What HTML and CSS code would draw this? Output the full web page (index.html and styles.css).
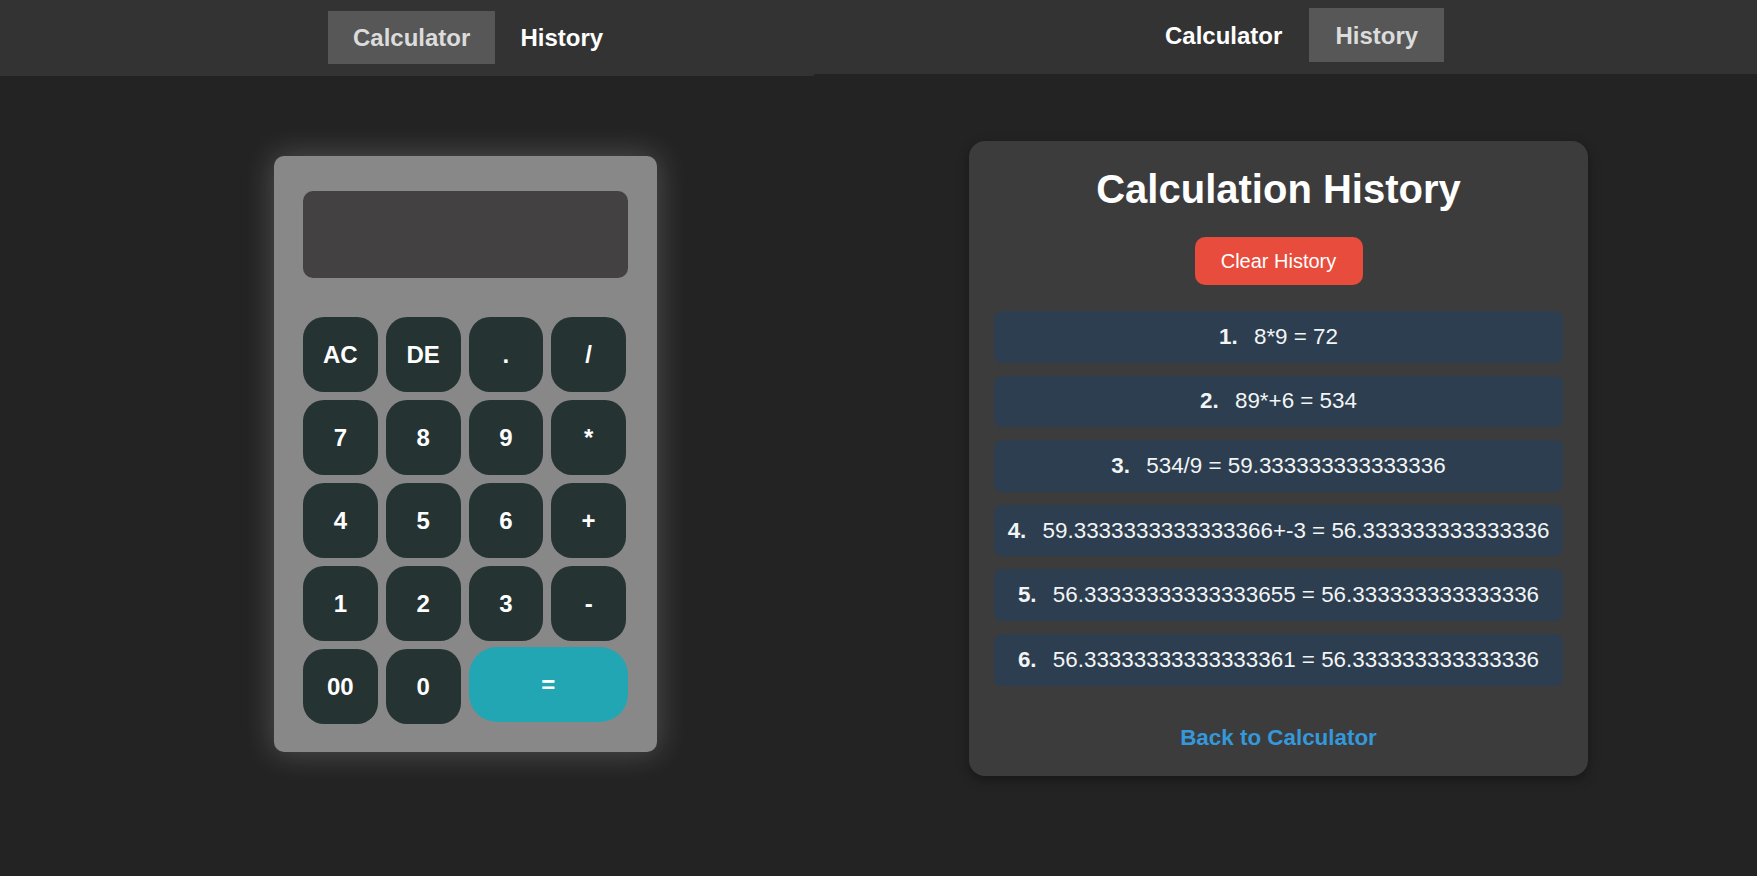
FILE: index.html
```html
<!DOCTYPE html>
<html lang="en">
<head>
<meta charset="utf-8">
<title>Calculator</title>
<link rel="stylesheet" href="styles.css">
</head>
<body>
<div class="split">
  <section class="pane pane-calc">
    <header class="topbar topbar-calc">
      <nav class="tabs">
        <a class="tab active">Calculator</a>
        <a class="tab">History</a>
      </nav>
    </header>
    <main class="calc-main">
      <div class="calculator">
        <div class="display"></div>
        <div class="keys">
          <button class="key">AC</button>
          <button class="key">DE</button>
          <button class="key">.</button>
          <button class="key">/</button>
          <button class="key">7</button>
          <button class="key">8</button>
          <button class="key">9</button>
          <button class="key">*</button>
          <button class="key">4</button>
          <button class="key">5</button>
          <button class="key">6</button>
          <button class="key">+</button>
          <button class="key">1</button>
          <button class="key">2</button>
          <button class="key">3</button>
          <button class="key">-</button>
          <button class="key">00</button>
          <button class="key">0</button>
          <button class="key key-equal">=</button>
        </div>
      </div>
    </main>
  </section>
  <section class="pane pane-history">
    <header class="topbar topbar-history">
      <nav class="tabs">
        <a class="tab">Calculator</a>
        <a class="tab active">History</a>
      </nav>
    </header>
    <main class="history-main">
      <div class="history-card">
        <h1 class="history-title">Calculation History</h1>
        <div class="clear-row"><button class="clear-btn">Clear History</button></div>
        <ul class="history-list">
          <li class="history-item"><span class="num">1.</span> 8*9 = 72</li>
          <li class="history-item"><span class="num">2.</span> 89*+6 = 534</li>
          <li class="history-item"><span class="num">3.</span> 534/9 = 59.333333333333336</li>
          <li class="history-item"><span class="num">4.</span> 59.3333333333333366+-3 = 56.333333333333336</li>
          <li class="history-item"><span class="num">5.</span> 56.33333333333333655 = 56.333333333333336</li>
          <li class="history-item"><span class="num">6.</span> 56.33333333333333361 = 56.333333333333336</li>
        </ul>
        <p class="back-row"><a class="back-link">Back to Calculator</a></p>
      </div>
    </main>
  </section>
</div>
</body>
</html>
```
FILE: styles.css
```css
* { box-sizing: border-box; }
html, body {
  margin: 0;
  padding: 0;
  background: #232323;
  font-family: "Liberation Sans", Arial, sans-serif;
  height: 876px;
  overflow: hidden;
}
.split {
  display: flex;
  height: 876px;
}
.pane {
  background: #232323;
  height: 876px;
}
.pane-calc { width: 814px; flex: none; }
.pane-history { flex: 1; }

.topbar {
  background: #333333;
  display: flex;
  align-items: flex-start;
}
.topbar-calc { height: 76px; padding: 11px 0 0 328px; }
.topbar-history { height: 74px; padding: 8px 0 0 325px; }
.tabs {
  display: flex;
}
.topbar-history .tabs { gap: 1px; }
.tab {
  display: block;
  font-size: 24px;
  font-weight: bold;
  color: #ffffff;
  padding: 13px 25px;
  line-height: 27px;
  text-decoration: none;
}
.topbar-history .tab { padding: 13.5px 26px; }
.tab.active {
  background: #575757;
  color: #dcdcdc;
}

/* Calculator */
.calc-main {
  padding: 80px 0 0 274px;
}
.calculator {
  width: 383px;
  background: #888888;
  border-radius: 10px;
  padding: 35px 29px 28px 29px;
  box-shadow: 0 0 30px 2px rgba(255, 255, 255, 0.2);
}
.display {
  height: 87px;
  background: #434142;
  border-radius: 10px;
  margin-bottom: 39px;
}
.keys {
  display: grid;
  grid-template-columns: repeat(4, 1fr);
  grid-auto-rows: 75px;
  column-gap: 8px;
  row-gap: 8px;
  width: 323px;
}
.key {
  border: none;
  background: #253333;
  color: #ffffff;
  font-family: "Liberation Sans", Arial, sans-serif;
  font-size: 24px;
  font-weight: bold;
  border-radius: 21px;
  padding: 0;
}
.key-equal {
  grid-column: span 2;
  background: #22a6b3;
  border-radius: 28px;
  margin: -2px -2px 2px 0;
}

/* History */
.history-main {
  padding: 67px 0 0 155px;
}
.history-card {
  width: 619px;
  background: #3c3c3c;
  border-radius: 16px;
  padding: 25px;
  box-shadow: 0 4px 12px rgba(0, 0, 0, 0.35);
}
.history-title {
  margin: 0 0 25px 0;
  font-size: 40px;
  font-weight: bold;
  color: #ffffff;
  text-align: center;
  line-height: 46px;
}
.clear-row {
  text-align: center;
}
.clear-btn {
  border: none;
  background: #e74c3c;
  color: #ffffff;
  font-family: "Liberation Sans", Arial, sans-serif;
  font-size: 20px;
  line-height: 24px;
  padding: 12px 26px;
  border-radius: 10px;
  width: 168px;
}
.history-list {
  list-style: none;
  margin: 26px 0 0 0;
  padding: 0;
}
.history-item {
  background: #2c3e50;
  color: #f2f4f5;
  border-radius: 8px;
  text-align: center;
  font-size: 22.4px;
  padding: 12.8px 0;
  margin-bottom: 13px;
  white-space: nowrap;
}
.num {
  font-weight: bold;
  margin-right: 10px;
}
.back-row {
  margin: 39px 0 0 0;
  text-align: center;
}
.back-link {
  color: #3498db;
  font-weight: bold;
  font-size: 22.4px;
  text-decoration: none;
}
```
